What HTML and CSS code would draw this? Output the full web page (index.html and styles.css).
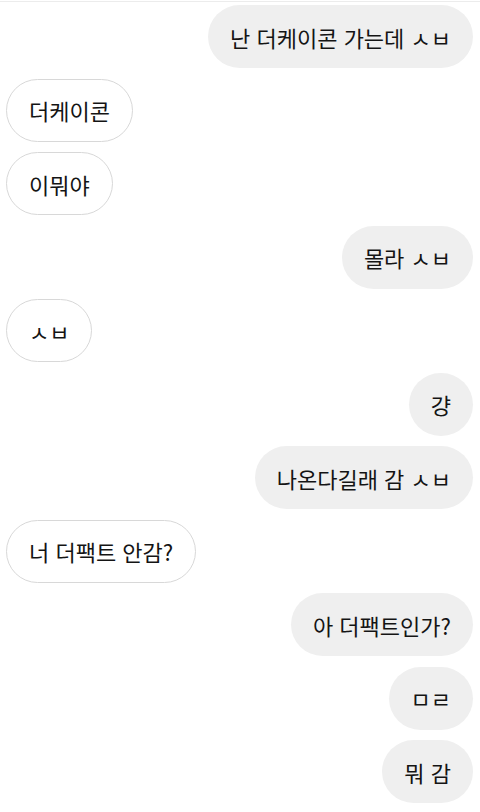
FILE: index.html
```html
<!DOCTYPE html>
<html lang="ko">
<head>
    <meta charset="UTF-8">
    <meta name="viewport" content="width=device-width, initial-scale=1.0">
    <title>Chat</title>
    <link rel="stylesheet" href="styles.css">
</head>
<body>
    <div class="top-line"></div>
    <div class="chat">
        <div class="bubble mine">난 더케이콘 가는데 ㅅㅂ</div>
        <div class="bubble theirs">더케이콘</div>
        <div class="bubble theirs">이뭐야</div>
        <div class="bubble mine">몰라 ㅅㅂ</div>
        <div class="bubble theirs">ㅅㅂ</div>
        <div class="bubble mine">걍</div>
        <div class="bubble mine">나온다길래 감 ㅅㅂ</div>
        <div class="bubble theirs">너 더팩트 안감?</div>
        <div class="bubble mine">아 더팩트인가?</div>
        <div class="bubble mine">ㅁㄹ</div>
        <div class="bubble mine">뭐 감</div>
    </div>
</body>
</html>
```
FILE: styles.css
```css
body {
    margin: 0;
    padding: 0;
    background-color: #fff;
    font-family: "Noto Sans CJK KR", "Noto Sans", sans-serif;
    color: #141414;
    overflow: hidden;
}

.top-line {
    height: 1px;
    margin-top: 1px;
    background-color: #ececec;
}

.chat {
    display: flex;
    flex-direction: column;
    gap: 10.5px;
    padding: 3px 7px 0 6px;
}

.bubble {
    box-sizing: border-box;
    height: 63px;
    padding: 0 22px;
    border-radius: 32px;
    display: flex;
    align-items: center;
    font-size: 22px;
    line-height: 26px;
    white-space: nowrap;
}

.mine {
    align-self: flex-end;
    background-color: #efefef;
}

.theirs {
    align-self: flex-start;
    background-color: #fff;
    border: 1.5px solid #d8d8d8;
}
```
